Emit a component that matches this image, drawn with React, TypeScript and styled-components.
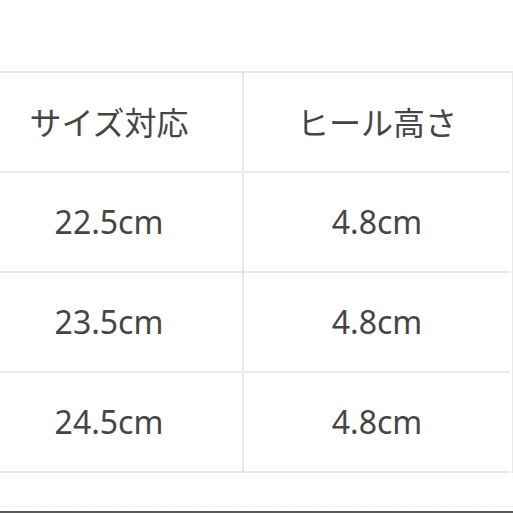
import React from "react";
import styled, { createGlobalStyle } from "styled-components";

const Global = createGlobalStyle`
  html, body { margin: 0; padding: 0; background: #fff; }
  body { font-family: "Noto Sans", "Noto Sans CJK JP", sans-serif; }
`;

const Page = styled.div`
  width: 513px;
  height: 513px;
  overflow: hidden;
  display: flex;
  flex-direction: column;
  background: #fff;
`;

const Table = styled.div`
  display: grid;
  grid-template-columns: 266px 268px;
  margin-top: 71px;
  margin-left: -24px;
  width: 536px;
  border-top: 2px solid #e9e9e9;
  border-right: 2px solid #e9e9e9;
`;

const Cell = styled.div<{ $divider?: boolean }>`
  box-sizing: border-box;
  height: 100px;
  display: flex;
  align-items: center;
  justify-content: center;
  border-bottom: 2px solid #e9e9e9;
  border-left: ${(p) => (p.$divider ? "2px solid #e9e9e9" : "none")};
  font-family: "Noto Sans", "Noto Sans CJK JP", sans-serif;
  font-size: 32px;
  color: #454545;
  padding-bottom: 2px;
`;

const Spacer = styled.div`
  flex: 1;
`;

const FaintLine = styled.div`
  height: 0;
  border-top: 1px dashed #f0f0f0;
  margin-bottom: 4px;
`;

const DarkLine = styled.div`
  height: 2px;
  background: #5a5a5a;
`;

const rows: [string, string][] = [
  ["サイズ対応", "ヒール高さ"],
  ["22.5cm", "4.8cm"],
  ["23.5cm", "4.8cm"],
  ["24.5cm", "4.8cm"],
];

export default function App() {
  return (
    <>
      <Global />
      <Page>
        <Table>
          {rows.map(([a, b], i) => (
            <React.Fragment key={i}>
              <Cell>{a}</Cell>
              <Cell $divider>{b}</Cell>
            </React.Fragment>
          ))}
        </Table>
        <Spacer />
        <FaintLine />
        <DarkLine />
      </Page>
    </>
  );
}
